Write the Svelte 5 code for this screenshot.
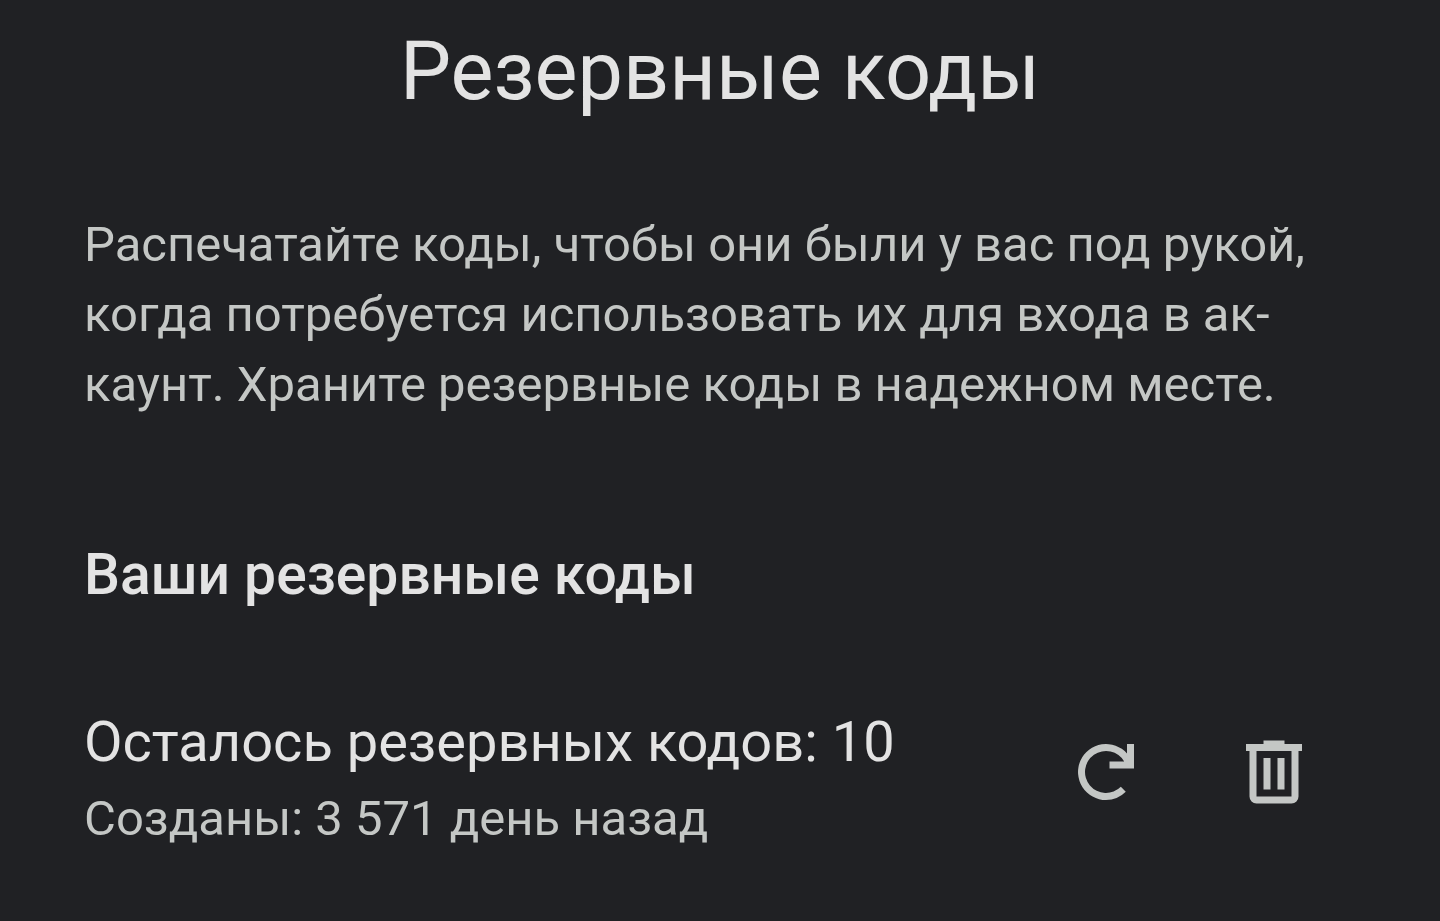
<script lang="ts">
	let remaining = $state(10);
	let age = $state('3 571 день назад');
</script>

<main>
	<h1>Резервные коды</h1>

	<p class="intro">
		Распечатайте коды, чтобы они были у вас под рукой, когда потребуется использовать их для входа
		в ак&shy;каунт. Храните резервные коды в надежном месте.
	</p>

	<section>
		<h2>Ваши резервные коды</h2>

		<div class="row">
			<div class="info">
				<p class="count">Осталось резервных кодов: {remaining}</p>
				<p class="age">Созданы: {age}</p>
			</div>

			<div class="actions">
				<button type="button" aria-label="Получить новые коды">
					<svg viewBox="0 0 24 24" fill="currentColor">
						<path
							d="M12 20A8 8 0 1 1 18 6.700V4H20V11H13V9H17.200A6 6 0 1 0 16.240 16.240L17.650 17.650A8 8 0 0 1 12 20Z"
						/>
					</svg>
				</button>
				<button type="button" aria-label="Удалить коды">
					<svg viewBox="0 0 24 24" fill="currentColor">
						<path
							fill-rule="evenodd"
							d="M9 3H15V4H20V6H19V19A2 2 0 0 1 17 21H7A2 2 0 0 1 5 19V6H4V4H9ZM7 6V19H17V6ZM9 8H11V17H9ZM13 8H15V17H13Z"
						/>
					</svg>
				</button>
			</div>
		</div>
	</section>
</main>

<style>
	:global(body) {
		margin: 0;
		background: #202124;
	}

	main {
		padding: 20px 84px 64px;
		font-family: 'Google Sans', Roboto, sans-serif;
		color: #e3e3e3;
	}

	h1,
	h2,
	p {
		margin: 0;
		font-weight: 400;
	}

	h1 {
		text-align: center;
		font-size: 81px;
		line-height: 104px;
	}

	.intro {
		margin-top: 86px;
		font-size: 49px;
		line-height: 70px;
		color: #c4c7c5;
	}

	h2 {
		margin-top: 120px;
		font-size: 57px;
		line-height: 70px;
		font-weight: 500;
	}

	.row {
		display: flex;
		justify-content: space-between;
		align-items: center;
		margin-top: 80px;
	}

	.info {
		padding-top: 10px;
	}

	.count {
		font-size: 56px;
		line-height: 84px;
	}

	.age {
		font-size: 49px;
		line-height: 70px;
		color: #c4c7c5;
	}

	.actions {
		display: flex;
		gap: 84px;
		margin-right: 40px;
	}

	button {
		padding: 0;
		border: 0;
		background: none;
		color: #c4c7c5;
		cursor: pointer;
	}

	svg {
		display: block;
		width: 84px;
		height: 84px;
	}
</style>
